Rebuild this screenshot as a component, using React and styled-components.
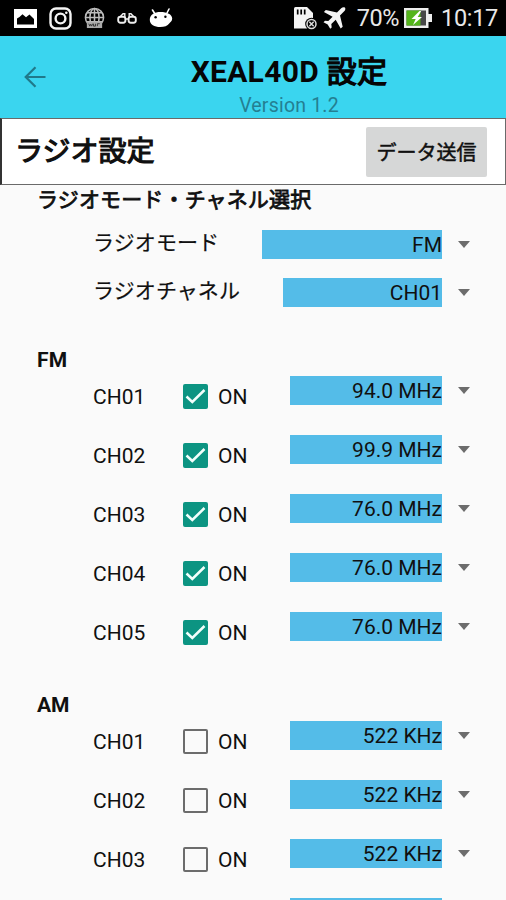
import React, { useState } from 'react';
import styled, { createGlobalStyle, ThemeProvider } from 'styled-components';

const theme = {
    headerColor: '#3ad5ef',
    selectColor: '#54bce8',
    checkColor: '#0c9482',
    backgroundColor: '#fafafa',
    textColor: '#101010',
    mutedColor: '#6c6c6c',
};

const GlobalStyle = createGlobalStyle`
    * {
        box-sizing: border-box;
    }
    body {
        margin: 0;
        background: ${theme.backgroundColor};
        color: ${theme.textColor};
        font-family: Roboto, "Noto Sans CJK JP", sans-serif;
        font-size: 21px;
        overflow: hidden;
    }
`;

const Screen = styled.div`
    width: 506px;
    height: 900px;
    overflow: hidden;
    background-color: ${props => props.theme.backgroundColor};
`;

const StatusBar = styled.div`
    display: flex;
    align-items: center;
    justify-content: space-between;
    height: 36px;
    padding: 0 8px 0 14px;
    background-color: #000;
    color: #e8e8e8;
`;

const StatusGroup = styled.div`
    display: flex;
    align-items: center;
    gap: ${props => props.$gap}px;
    svg {
        display: block;
    }
`;

const StatusText = styled.span`
    font-size: 23.5px;
    line-height: 36px;
    letter-spacing: ${props => props.$spacing || 0}px;
    margin-left: ${props => props.$left || 0}px;
`;

const Header = styled.header`
    display: grid;
    grid-template-columns: 72px 1fr 0;
    height: 82px;
    background-color: ${props => props.theme.headerColor};
`;

const BackButton = styled.button`
    display: flex;
    align-items: center;
    background: none;
    border: none;
    padding: 0 0 0 24px;
    cursor: pointer;
`;

const HeaderText = styled.div`
    display: flex;
    flex-direction: column;
    align-items: center;
    padding-top: 15px;
`;

const Title = styled.h1`
    margin: 0;
    font-size: 30px;
    line-height: 42px;
    font-weight: 700;
    letter-spacing: 0.3px;
    color: #050505;
    white-space: nowrap;
`;

/* Japanese headings use the regular weight thickened by a stroke */
const BoldJapanese = styled.span`
    font-weight: 400;
    -webkit-text-stroke: ${props => props.$stroke}px currentColor;
`;

const Version = styled.span`
    margin-top: 1px;
    font-size: 19.5px;
    line-height: 24px;
    letter-spacing: 0.2px;
    color: #247f92;
`;

const SectionBar = styled.div`
    display: flex;
    align-items: center;
    justify-content: space-between;
    height: 67px;
    padding: 0 18px 0 13px;
    background-color: #fff;
    border: 1px solid #6a6a6a;
    border-left: 2px solid #333;
`;

const SectionTitle = styled.h2`
    margin: 0;
    font-size: 28px;
    line-height: 40px;
`;

const SendButton = styled.button`
    width: 121px;
    height: 50px;
    padding: 0 0 1px;
    border: none;
    border-radius: 2px;
    background-color: #d6d7d7;
    color: ${props => props.theme.textColor};
    font-family: inherit;
    font-size: 20px;
    cursor: pointer;
`;

const Group = styled.section`
    height: ${props => props.$height}px;
`;

const GroupTitle = styled.h3`
    margin: 0 0 ${props => props.$gap}px;
    padding-left: 37px;
    font-size: 21px;
    line-height: 30px;
    font-weight: 700;
    letter-spacing: ${props => props.$spacing || 0}px;
`;

const OptionRow = styled.div`
    display: flex;
    align-items: center;
    justify-content: space-between;
    height: 48px;
    padding: 0 36px 0 93px;
`;

const OptionLabel = styled.span`
    line-height: 30px;
    padding-bottom: 3px;
    letter-spacing: 0.1px;
    -webkit-text-stroke: 0.2px currentColor;
`;

const ChannelRow = styled.div`
    display: grid;
    grid-template-columns: 90px 107px 1fr;
    align-items: center;
    height: 59px;
    padding: 0 35px 0 93px;
`;

const ChannelLabel = styled.span`
    line-height: 30px;
    padding-top: 1px;
`;

const CheckLabel = styled.label`
    display: flex;
    align-items: center;
    gap: 10px;
    line-height: 30px;
    cursor: pointer;
    span {
        padding-top: 1px;
    }
`;

const HiddenInput = styled.input`
    position: absolute;
    opacity: 0;
    width: 0;
    height: 0;
    margin: 0;
`;

const CheckBox = styled.div`
    display: flex;
    align-items: center;
    justify-content: center;
    width: 25px;
    height: 25px;
    border-radius: 2px;
    border: 2px solid ${props => props.$checked ? props.theme.checkColor : props.theme.mutedColor};
    background-color: ${props => props.$checked ? props.theme.checkColor : 'transparent'};
    svg {
        flex: none;
    }
`;

const SelectWrapper = styled.div`
    display: flex;
    align-items: center;
    gap: 16px;
    padding-bottom: ${props => props.$raise || 0}px;
`;

const SelectValue = styled.div`
    width: ${props => props.$width}px;
    height: 29px;
    padding-top: 1px;
    line-height: 29px;
    text-align: right;
    background-color: ${props => props.theme.selectColor};
`;

const Caret = styled.div`
    border: 6.5px solid transparent;
    border-top: 7px solid ${props => props.theme.mutedColor};
    border-bottom: 0;
`;

const PictureIcon = () => (
    <svg width="23" height="19" viewBox="0 0 23 19">
        <path fill="#fff" d="M0 0h23v19H0z" />
        <path fill="#000" d="M3 15.500V9.500L5.500 8 8.500 5.200l3.500 3 3.500-2.700L18 8l2 2v5.500z" />
    </svg>
);

const InstagramIcon = () => (
    <svg width="23" height="23" viewBox="0 0 23 23" fill="none" stroke="#f4f4f4">
        <rect x="1.500" y="1.500" width="20" height="20" rx="5.500" strokeWidth="2.400" />
        <circle cx="11.500" cy="11.500" r="4.900" strokeWidth="2.400" />
        <circle cx="17.300" cy="5.700" r="1.300" fill="#f4f4f4" stroke="none" />
    </svg>
);

const GlobeIcon = () => (
    <svg width="21" height="22" viewBox="0 0 22 22" fill="none" stroke="#bcbcbc" strokeWidth="1.600">
        <circle cx="11" cy="10.500" r="9.500" />
        <ellipse cx="11" cy="10.500" rx="4.800" ry="9.500" />
        <path d="M11 1v15M1.500 10.500h19M3 5.500h16M3 15h16" />
        <rect x="3" y="15" width="16" height="6.500" fill="#aaa" stroke="none" />
        <path stroke="#333" strokeWidth="1" d="M5 17l1 2.500 1-2 1 2 1-2.500M10 17v2.500h2V17M14 19.500V17h2.500" />
    </svg>
);

const GlassesIcon = () => (
    <svg width="20" height="13" viewBox="0 0 20 13" fill="none" stroke="#eee" strokeWidth="1.900">
        <rect x="1.200" y="4.800" width="7.200" height="6" rx="2.200" />
        <rect x="11.600" y="4.800" width="7.200" height="6" rx="2.200" />
        <path d="M8 7h4M3 5l3-3.200h1.800V5M17 5l-3-3.200h-1.800V5" strokeWidth="1.400" />
    </svg>
);

const DroidIcon = () => (
    <svg width="24" height="20" viewBox="0 0 24 20">
        <path stroke="#fff" strokeWidth="1.600" strokeLinecap="round" d="M3.500 2l2.500 4M20 1l-2 4" />
        <path fill="#fff" d="M.8 12C.8 6.500 5.500 4 11.500 4c6.500 0 11.500 2.200 11.700 6.500.1 2.500-2 3.500-3 5-1.500 2.500-5 3.500-9 3.500C5.500 19 .8 16.500.8 12z" />
        <circle cx="6.600" cy="9.300" r="1.200" fill="#000" />
        <circle cx="16.400" cy="8.800" r="1.200" fill="#000" />
    </svg>
);

const SdCardIcon = () => (
    <svg width="24" height="23" viewBox="0 0 24 23">
        <path fill="#f4f4f4" d="M0 1.500Q0 0 1.500 0H13l6 6v15.500H0z" />
        <path stroke="#000" strokeWidth="1.700" d="M3.700 2.500v5M7.200 2.500v5M10.700 2.500v5" />
        <circle cx="17.500" cy="17" r="6.300" fill="#000" />
        <circle cx="17.500" cy="17" r="4.500" fill="none" stroke="#ddd" strokeWidth="1.500" />
        <path stroke="#ddd" strokeWidth="1.400" d="M15.300 14.800l4.400 4.400M19.700 14.800l-4.400 4.400" />
    </svg>
);

const PlaneIcon = () => (
    <svg width="23" height="22" viewBox="0 0 23 22">
        <path fill="#f4f4f4" d="M21.800.6c1 1 .5 2.600-.6 3.700L17 8.500l2.700 11.200-2 1.800-5-8.700-4.400 4.300.4 3.300-1.500 1.400-2.500-4.300L.5 15.200 2 13.700l3.300.4 4.300-4.300L.9 4.900l1.900-2L14 5.500l4.200-4.200C19.300.2 20.900-.3 21.800.6z" />
    </svg>
);

const BatteryIcon = () => (
    <svg width="28" height="20" viewBox="0 0 28 20">
        <path fill="#eee" d="M0 0h24.500v6H28v8h-3.500v6H0z" />
        <rect x="2.500" y="2.500" width="19.500" height="15" fill="#474747" />
        <rect x="2.500" y="2.500" width="14" height="15" fill="#54b51b" />
        <path fill="#fff" d="M15.500 3L7.500 11h4.200L9 17l9-8h-4.300l3.500-6z" />
    </svg>
);

const BackIcon = () => (
    <svg width="22" height="22" viewBox="0 0 22 22" fill="none" stroke="#20798a" strokeWidth="2.200">
        <path d="M21.500 11H2M11.500 1.200L1.700 11l9.800 9.800" />
    </svg>
);

const CheckIcon = () => (
    <svg width="21" height="21" viewBox="0 0 21 21" fill="none" stroke="#f2fffc" strokeWidth="2.500">
        <path d="M1.500 10.500l5.800 5.500L19.500 4" />
    </svg>
);

const Select = ({ value, width, raise }) => (
    <SelectWrapper $raise={raise}>
        <SelectValue $width={width}>{value}</SelectValue>
        <Caret />
    </SelectWrapper>
);

const Channel = ({ name, value, on }) => {
    const [checked, setChecked] = useState(on);
    return (
        <ChannelRow>
            <ChannelLabel>{name}</ChannelLabel>
            <CheckLabel>
                <HiddenInput type="checkbox" checked={checked} onChange={() => setChecked(!checked)} />
                <CheckBox $checked={checked}>{checked && <CheckIcon />}</CheckBox>
                <span>ON</span>
            </CheckLabel>
            <Select value={value} width={152} raise={12} />
        </ChannelRow>
    );
};

const fmChannels = [
    { name: 'CH01', value: '94.0 MHz' },
    { name: 'CH02', value: '99.9 MHz' },
    { name: 'CH03', value: '76.0 MHz' },
    { name: 'CH04', value: '76.0 MHz' },
    { name: 'CH05', value: '76.0 MHz' },
];

const amChannels = [
    { name: 'CH01', value: '522 KHz' },
    { name: 'CH02', value: '522 KHz' },
    { name: 'CH03', value: '522 KHz' },
    { name: 'CH04', value: '522 KHz' },
];

export default function App() {
    return (
        <ThemeProvider theme={theme}>
            <GlobalStyle />
            <Screen>
                <StatusBar>
                    <StatusGroup $gap={12}>
                        <PictureIcon />
                        <InstagramIcon />
                        <GlobeIcon />
                        <GlassesIcon />
                        <DroidIcon />
                    </StatusGroup>
                    <StatusGroup $gap={5}>
                        <SdCardIcon />
                        <PlaneIcon />
                        <StatusText $left={6} $spacing={-0.5}>70%</StatusText>
                        <BatteryIcon />
                        <StatusText $left={4} $spacing={-0.3}>10:17</StatusText>
                    </StatusGroup>
                </StatusBar>
                <Header>
                    <BackButton aria-label="Back">
                        <BackIcon />
                    </BackButton>
                    <HeaderText>
                        <Title>XEAL40D <BoldJapanese $stroke={1.3}>設定</BoldJapanese></Title>
                        <Version>Version 1.2</Version>
                    </HeaderText>
                </Header>
                <SectionBar>
                    <SectionTitle>
                        <BoldJapanese $stroke={1.2}>ラジオ設定</BoldJapanese>
                    </SectionTitle>
                    <SendButton>
                        <BoldJapanese $stroke={0.5}>データ送信</BoldJapanese>
                    </SendButton>
                </SectionBar>
                <Group $height={160}>
                    <GroupTitle $gap={5} $spacing={0.15}>
                        <BoldJapanese $stroke={0.8}>ラジオモード・チャネル選択</BoldJapanese>
                    </GroupTitle>
                    <OptionRow>
                        <OptionLabel>ラジオモード</OptionLabel>
                        <Select value="FM" width={180} />
                    </OptionRow>
                    <OptionRow>
                        <OptionLabel>ラジオチャネル</OptionLabel>
                        <Select value="CH01" width={159} />
                    </OptionRow>
                </Group>
                <Group $height={345}>
                    <GroupTitle $gap={-8} $spacing={0.2}>FM</GroupTitle>
                    {fmChannels.map(channel => <Channel key={channel.name} on {...channel} />)}
                </Group>
                <Group $height={345}>
                    <GroupTitle $gap={-8}>AM</GroupTitle>
                    {amChannels.map(channel => <Channel key={channel.name} on={false} {...channel} />)}
                </Group>
            </Screen>
        </ThemeProvider>
    );
}
